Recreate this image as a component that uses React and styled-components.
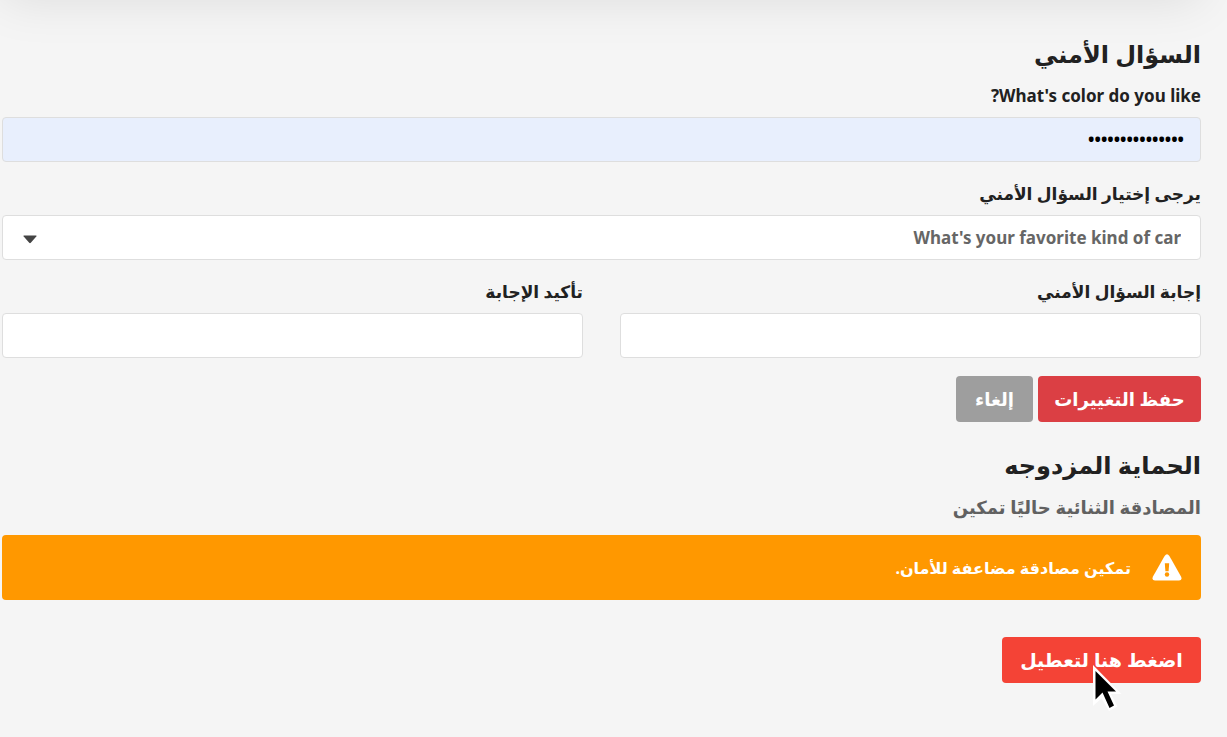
import React, { useState } from 'react';
import styled, { createGlobalStyle } from 'styled-components';

// Global
const GlobalStyle = createGlobalStyle`
    *, *::before, *::after {
        box-sizing: border-box;
    }

    body {
        margin: 0;
        background-color: #f5f5f5;
        color: #212121;
        font-family: 'Noto Sans', 'DejaVu Sans', sans-serif;
        font-size: 17px;
        font-weight: 700;
        line-height: 24px;
    }

    button, input, select {
        font: inherit;
    }
`;

// Styled
const Page = styled.main`
    padding: 0 26px 54px 2px;
    overflow: hidden;
`;

const PreviousCard = styled.div`
    height: 120px;
    margin-top: -120px;
    border-radius: 4px;
    background-color: white;
    box-shadow: 0 0 50px rgba(0, 0, 0, 0.1);
`;

const Section = styled.section`
    padding-top: ${({ $top }) => $top}px;
`;

const Title = styled.h2`
    margin: 0 0 12px;
    font-size: 24px;
    font-weight: 700;
    line-height: 36px;
`;

const Field = styled.div`
    display: flex;
    flex-direction: column;
    gap: 9px;
    margin-bottom: 20px;
`;

const Row = styled.div`
    display: grid;
    grid-template-columns: 1fr 1fr;
    column-gap: 37px;
`;

const Input = styled.input`
    width: 100%;
    height: 45px;
    padding: 0 16px;
    border: 1px solid #dedede;
    border-radius: 4px;
    background-color: ${({ $filled }) => ($filled ? '#e8effd' : 'white')};
    color: black;
    outline: none;
`;

const SelectBox = styled.div`
    position: relative;

    svg {
        position: absolute;
        left: 21px;
        top: 20px;
        pointer-events: none;
    }
`;

const Select = styled.select`
    display: block;
    width: 100%;
    height: 45px;
    padding: 0 19px 0 48px;
    border: 1px solid #dedede;
    border-radius: 4px;
    appearance: none;
    background-color: white;
    color: #666;
    outline: none;
`;

const Buttons = styled.div`
    display: flex;
    gap: 5px;
    margin-top: -2px;
`;

const Button = styled.button`
    position: relative;
    min-width: ${({ $minWidth }) => $minWidth}px;
    height: 46px;
    padding: 0 16px;
    border: none;
    border-radius: 4px;
    background-color: ${({ $color }) => $color};
    color: white;
    font-size: ${({ $large }) => ($large ? 19 : 18)}px;
    white-space: nowrap;
`;

const Status = styled.p`
    margin: 0 0 16px;
    color: #616161;
    font-size: 18px;
`;

const Alert = styled.div`
    display: flex;
    align-items: center;
    gap: 21px;
    min-height: 65px;
    margin-bottom: 37px;
    padding: 0 19px;
    border-radius: 4px;
    background-color: #ff9800;
    color: white;
    font-size: 16px;

    svg {
        flex-shrink: 0;
    }

    p {
        margin: 0;
    }
`;

const Pointer = styled.svg`
    position: absolute;
    left: 90px;
    top: 26px;
    pointer-events: none;
`;

const WarningIcon = () => (
    <svg width='30' height='27' viewBox='0 0 30 27' aria-hidden='true'>
        <path d='M12.6 1.900Q15-1.300 17.400 1.900L29 22.400Q30.600 26.200 27 26.500H3Q-.6 26.200 1 22.400Z' fill='white' />
        <path d='M12.800 9.200H17.200L16.600 17.300H13.400Z' fill='#ff9800' />
        <circle cx='15' cy='20.500' r='2.200' fill='#ff9800' />
    </svg>
);

const ArrowIcon = () => (
    <svg width='14' height='9' viewBox='0 0 14 9' aria-hidden='true'>
        <path d='M1 .5H13Q14.200 .6 13.300 1.600L7.800 7.800Q7 8.700 6.200 7.800L.7 1.600Q-.2 .6 1 .5Z' fill='#444' />
    </svg>
);

const App = () => {
    const [current, setCurrent] = useState('favouritecolour');

    return (
        <>
            <GlobalStyle />
            <Page dir='rtl' lang='ar'>
                <PreviousCard />

                <Section $top={36}>
                    <Title>السؤال الأمني</Title>
                    <Field>
                        <label htmlFor='current'>What's color do you like?</label>
                        <Input
                            id='current'
                            type='password'
                            $filled
                            value={current}
                            onChange={(e) => setCurrent(e.target.value)}
                        />
                    </Field>
                    <Field>
                        <label htmlFor='question'>يرجى إختيار السؤال الأمني</label>
                        <SelectBox>
                            <Select id='question'>
                                <option>What's your favorite kind of car</option>
                            </Select>
                            <ArrowIcon />
                        </SelectBox>
                    </Field>
                    <Row>
                        <Field>
                            <label htmlFor='answer'>إجابة السؤال الأمني</label>
                            <Input id='answer' type='text' />
                        </Field>
                        <Field>
                            <label htmlFor='confirm'>تأكيد الإجابة</label>
                            <Input id='confirm' type='text' />
                        </Field>
                    </Row>
                    <Buttons>
                        <Button type='button' $color='#db3f44' $minWidth={163}>حفظ التغييرات</Button>
                        <Button type='button' $color='#9e9e9e' $minWidth={77}>إلغاء</Button>
                    </Buttons>
                </Section>

                <Section $top={25}>
                    <Title>الحماية المزدوجه</Title>
                    <Status>المصادقة الثنائية حاليًا تمكين</Status>
                    <Alert role='alert'>
                        <WarningIcon />
                        <p>تمكين مصادقة مضاعفة للأمان.</p>
                    </Alert>
                    <Button type='button' $color='#f44336' $minWidth={199} $large>
                        اضغط هنا لتعطيل
                        <Pointer width='32' height='50' viewBox='0 0 32 50' aria-hidden='true'>
                            <path d='M1 2V43L9.500 35.500L17 48L25.500 43.500L19 31H29.500Z' fill='white' />
                            <path d='M3.500 8V36.500L10.500 29.500L17.500 45L22 42.500L15.500 28.500H24Z' fill='black' />
                        </Pointer>
                    </Button>
                </Section>
            </Page>
        </>
    );
};

export default App;
